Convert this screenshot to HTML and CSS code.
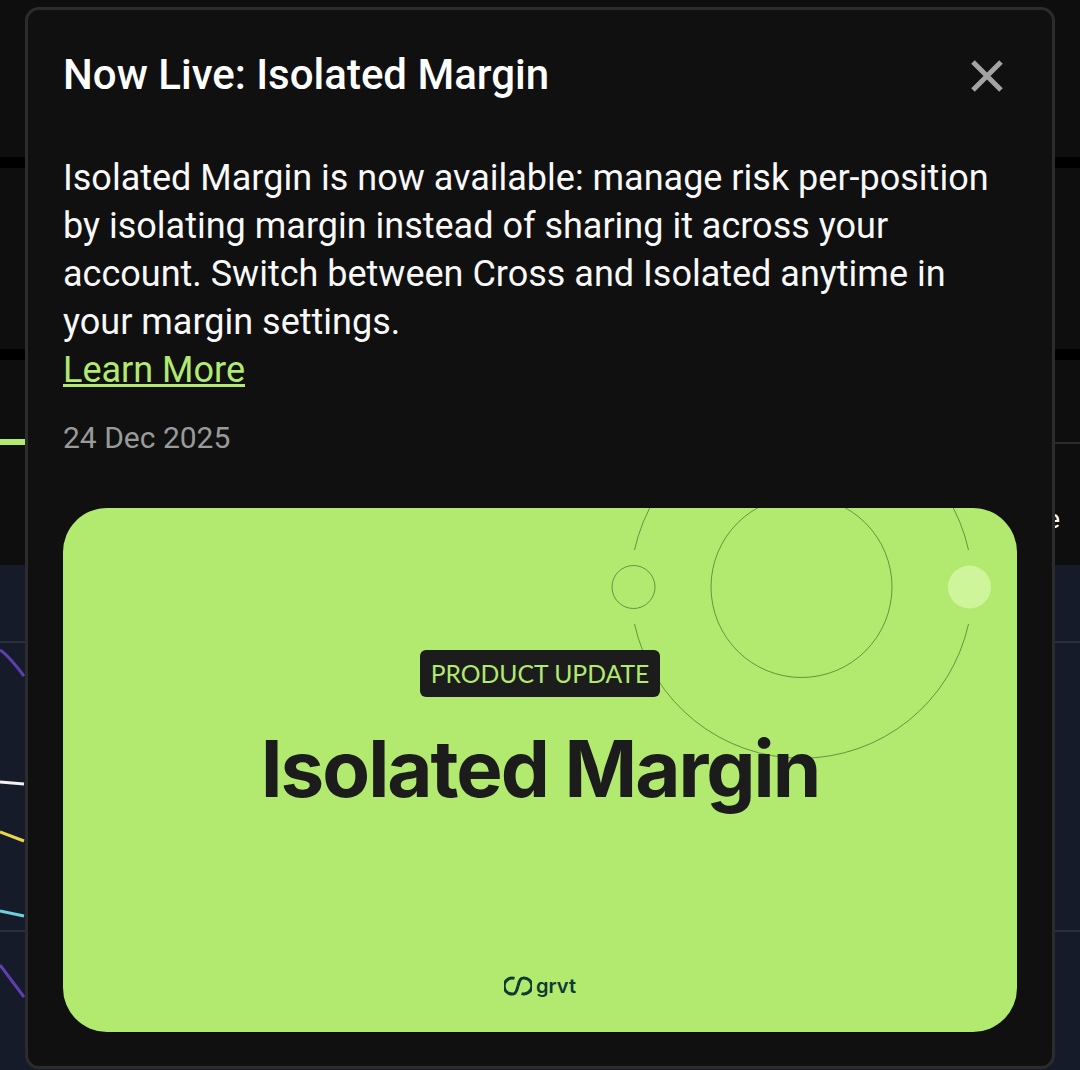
FILE: index.html
```html
<!DOCTYPE html>
<html lang="en">
<head>
    <meta charset="UTF-8">
    <meta name="viewport" content="width=device-width, initial-scale=1.0">
    <title>Now Live: Isolated Margin</title>
    <link rel="stylesheet" href="styles.css">
</head>
<body>
    <div class="page">
        <div class="panel panel-top"></div>
        <div class="panel panel-mid"></div>
        <div class="panel panel-tabs">
            <div class="tab-line"></div>
            <div class="tab-active"></div>
            <div class="tab-label">Change</div>
        </div>
        <div class="chart">
            <svg class="chart-lines" width="1080" height="505" viewBox="0 0 1080 505">
                <line x1="0" y1="77" x2="1080" y2="77" stroke="#2a2f3b" stroke-width="2"/>
                <line x1="0" y1="366" x2="1080" y2="366" stroke="#2a2f3b" stroke-width="2"/>
                <path d="M0 85 Q8 90 24 111" stroke="#5e3fb0" stroke-width="3" fill="none"/>
                <path d="M0 217 L24 219" stroke="#f2f2f2" stroke-width="3" fill="none"/>
                <path d="M0 267 L24 276" stroke="#e8d84a" stroke-width="3" fill="none"/>
                <path d="M0 346 L24 351" stroke="#6fd0de" stroke-width="3" fill="none"/>
                <path d="M0 400 L24 432" stroke="#5e3fb0" stroke-width="3" fill="none"/>
            </svg>
        </div>
    </div>

    <div class="modal">
        <div class="modal-header">
            <h1>Now Live: Isolated Margin</h1>
            <svg class="close-icon" width="32" height="32" viewBox="0 0 32 32">
                <path d="M2 2 L30 30 M30 2 L2 30" stroke="#a3a3a3" stroke-width="5" fill="none"/>
            </svg>
        </div>
        <p class="modal-text">Isolated Margin is now available: manage risk per-position by isolating margin instead of sharing it across your account. Switch between Cross and Isolated anytime in your margin settings.<br><a href="#">Learn More</a></p>
        <p class="modal-date">24 Dec 2025</p>

        <div class="banner">
            <svg class="banner-art" width="954" height="524" viewBox="0 0 954 524">
                <g fill="none" stroke="#2f5a24" stroke-width="0.6">
                    <circle cx="738.5" cy="79" r="90.5"/>
                    <circle cx="570.5" cy="79" r="21.5"/>
                    <path d="M571.5 116 A171 171 0 0 0 905.5 116"/>
                    <path d="M571.5 42 A171 171 0 0 1 905.5 42"/>
                </g>
                <circle cx="906.5" cy="79" r="21.5" fill="#cff59a"/>
            </svg>
            <span class="banner-badge">PRODUCT UPDATE</span>
            <div class="banner-title">Isolated Margin</div>
            <div class="banner-logo">
                <svg width="28" height="20" viewBox="0 0 28 20">
                    <path d="M10.5 2.4 A8 8 0 1 0 9 18 C12.5 18 13 13 14 10" stroke="#0c3b33" stroke-width="3" fill="none"/>
                    <path d="M17.5 17.6 A8 8 0 1 0 19 2 C15.5 2 15 7 14 10" stroke="#0c3b33" stroke-width="3" fill="none"/>
                </svg>
                <span>grvt</span>
            </div>
        </div>
    </div>
</body>
</html>
```

FILE: styles.css
```css
* {
    box-sizing: border-box;
}
body {
    margin: 0;
    background-color: #000000;
    font-family: Roboto, sans-serif;
    color: white;
    overflow: hidden;
}
.page {
    display: flex;
    flex-direction: column;
    height: 1070px;
}
.panel {
    background-color: #0e0e0e;
}
.panel-top {
    height: 157px;
}
.panel-mid {
    height: 181px;
    margin-top: 11px;
}
.panel-tabs {
    height: 205px;
    margin-top: 11px;
    padding-top: 80px;
    position: relative;
}
.tab-line {
    height: 2px;
    margin-top: 2px;
    background-color: #2b2b2b;
}
.tab-active {
    position: absolute;
    left: 0;
    top: 79px;
    width: 30px;
    height: 6px;
    background-color: #b2e96f;
}
.tab-label {
    margin-top: 58px;
    padding-right: 20px;
    text-align: right;
    font-size: 26px;
    line-height: 34px;
}
.chart {
    flex: 1;
    background-color: #161b29;
}
.chart-lines {
    display: block;
}

.modal {
    position: absolute;
    left: 25px;
    top: 7px;
    width: 1030px;
    height: 1062px;
    padding: 37px 35px 0 35px;
    background-color: #101010;
    border: 3px solid #2c2c2c;
    border-radius: 14px;
}
.modal-header {
    display: flex;
    justify-content: space-between;
    align-items: center;
    height: 56px;
    padding-right: 14px;
}
.modal-header h1 {
    margin: 0;
    font-size: 42px;
    font-weight: 500;
    line-height: 56px;
}
.close-icon {
    display: block;
    margin-top: 2px;
}
.modal-text {
    margin: 51px 0 0 0;
    font-size: 36px;
    line-height: 48px;
    color: #f8f8f8;
}
.modal-text a {
    color: #b2e96f;
    text-decoration: underline;
}
.modal-date {
    margin: 24px 0 0 0;
    font-size: 30px;
    line-height: 40px;
    color: #9a9a9a;
}
.banner {
    position: relative;
    display: flex;
    flex-direction: column;
    align-items: center;
    width: 954px;
    height: 524px;
    margin: 50px 0 0 0;
    padding: 142px 0 34px 0;
    background-color: #b2e96f;
    border-radius: 44px;
    overflow: hidden;
}
.banner-art {
    position: absolute;
    left: 0;
    top: 0;
}
.banner-badge {
    position: relative;
    padding: 0 11px;
    height: 47px;
    line-height: 47px;
    font-family: Lato, sans-serif;
    font-size: 24.7px;
    color: #b2e96f;
    background-color: #1c1c1c;
    border-radius: 6px;
}
.banner-title {
    position: relative;
    margin-top: 22px;
    font-family: Inter, sans-serif;
    font-size: 78px;
    font-weight: 700;
    line-height: 100px;
    letter-spacing: -2px;
    color: #1c1c1c;
}
.banner-logo {
    display: flex;
    align-items: center;
    gap: 4px;
    margin-top: auto;
    color: #0c3b33;
    font-family: Inter, sans-serif;
    font-size: 20px;
    font-weight: 600;
    line-height: 24px;
}
```
